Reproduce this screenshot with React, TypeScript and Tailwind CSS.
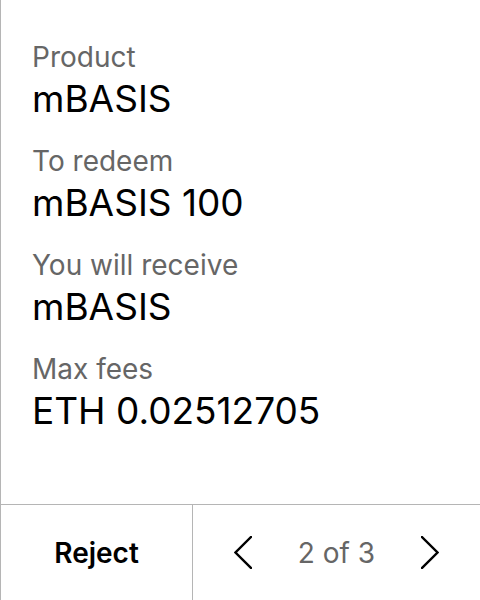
const rows = [
  { label: "Product", value: "mBASIS" },
  { label: "To redeem", value: "mBASIS 100" },
  { label: "You will receive", value: "mBASIS" },
  { label: "Max fees", value: "ETH 0.02512705" },
];

function Chevron({ dir }: { dir: "left" | "right" }) {
  return (
    <svg width="18" height="33" viewBox="0 0 18 33" fill="none" className="text-black">
      <polyline
        points={dir === "left" ? "17,1 1.5,16.5 17,32" : "1,1 16.5,16.5 1,32"}
        stroke="currentColor"
        strokeWidth="2.4"
        strokeLinecap="square"
      />
    </svg>
  );
}

export default function App() {
  return (
    <div
      className="flex h-[600px] w-[480px] flex-col border-l border-[#b5b5b5] bg-white"
      style={{ fontFamily: "Inter, 'Noto Sans', sans-serif" }}
    >
      <div className="flex flex-1 flex-col gap-[23px] pl-[31px] pt-[40px]">
        {rows.map((r) => (
          <div key={r.label} className="flex flex-col gap-[3px]">
            <div className="text-[28px] leading-[34px] text-[#666666]">{r.label}</div>
            <div className="text-[37px] leading-[44px] text-black">{r.value}</div>
          </div>
        ))}
      </div>
      <div className="flex h-[96px] border-t border-[#b5b5b5]">
        <button className="flex w-[192px] items-center justify-center border-r border-[#b5b5b5] text-[28px] font-semibold text-black">
          Reject
        </button>
        <div className="flex flex-1 items-center justify-center gap-[46px]">
          <Chevron dir="left" />
          <span className="text-[28px] text-[#666666]">2 of 3</span>
          <Chevron dir="right" />
        </div>
      </div>
    </div>
  );
}
